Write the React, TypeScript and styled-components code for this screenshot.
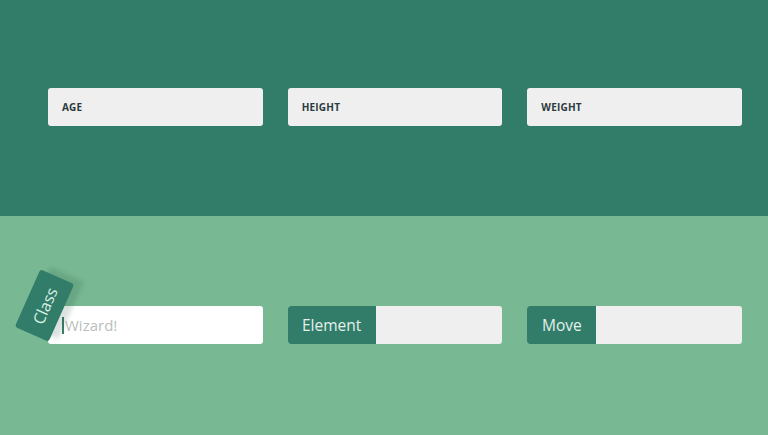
import React from 'react';
import styled, { createGlobalStyle } from 'styled-components';

const GlobalStyle = createGlobalStyle`
  html, body {
    margin: 0;
    padding: 0;
    width: 768px;
    height: 435px;
    overflow: hidden;
    font-family: "Open Sans", "Liberation Sans", sans-serif;
  }
`;

const Page = styled.div`
  display: flex;
  flex-direction: column;
  width: 768px;
  height: 435px;
`;

const Section = styled.div<{ $bg: string; $height: number; $top: number }>`
  background: ${(p) => p.$bg};
  height: ${(p) => p.$height}px;
  box-sizing: border-box;
  padding: ${(p) => p.$top}px 26px 0 48px;
  display: flex;
  gap: 25px;
  align-items: flex-start;
`;

const Field = styled.div<{ $bg?: string }>`
  position: relative;
  width: 215px;
  height: 38px;
  box-sizing: border-box;
  border-radius: 3px;
  background: ${(p) => p.$bg || '#efefef'};
  display: flex;
  align-items: stretch;
`;

const FieldLabel = styled.span`
  display: flex;
  align-items: center;
  padding-left: 14px;
  font-size: 10px;
  font-weight: 700;
  color: #2b3a3e;
  letter-spacing: 0.2px;
`;

const Addon = styled.span<{ $width: number }>`
  width: ${(p) => p.$width}px;
  background: #317d69;
  border-radius: 3px 0 0 3px;
  color: #e3f1ea;
  font-size: 15.5px;
  display: flex;
  align-items: center;
  justify-content: center;
`;

const Placeholder = styled.span`
  display: flex;
  align-items: center;
  padding-left: 14px;
  font-size: 15px;
  color: #b9bfbc;
`;

const Caret = styled.span`
  width: 2px;
  height: 17px;
  background: #3c7d68;
  margin-right: 1px;
`;

const Tag = styled.div`
  position: absolute;
  left: -35px;
  top: -19px;
  width: 63px;
  height: 37px;
  border-radius: 3px;
  background: #317d69;
  color: #dcefe6;
  font-size: 16px;
  display: flex;
  align-items: center;
  justify-content: center;
  transform: rotate(-66deg);
  box-shadow: 6px 8px 4px rgba(30, 80, 60, 0.16);
`;

const App: React.FC = () => {
  return (
    <Page>
      <GlobalStyle />
      <Section $bg="#317d69" $height={216} $top={88}>
        <Field><FieldLabel>AGE</FieldLabel></Field>
        <Field><FieldLabel>HEIGHT</FieldLabel></Field>
        <Field><FieldLabel>WEIGHT</FieldLabel></Field>
      </Section>
      <Section $bg="#78b892" $height={219} $top={90}>
        <Field $bg="#ffffff">
          <Placeholder><Caret />Wizard!</Placeholder>
          <Tag>Class</Tag>
        </Field>
        <Field>
          <Addon $width={88}>Element</Addon>
        </Field>
        <Field>
          <Addon $width={69}>Move</Addon>
        </Field>
      </Section>
    </Page>
  );
};

export default App;
